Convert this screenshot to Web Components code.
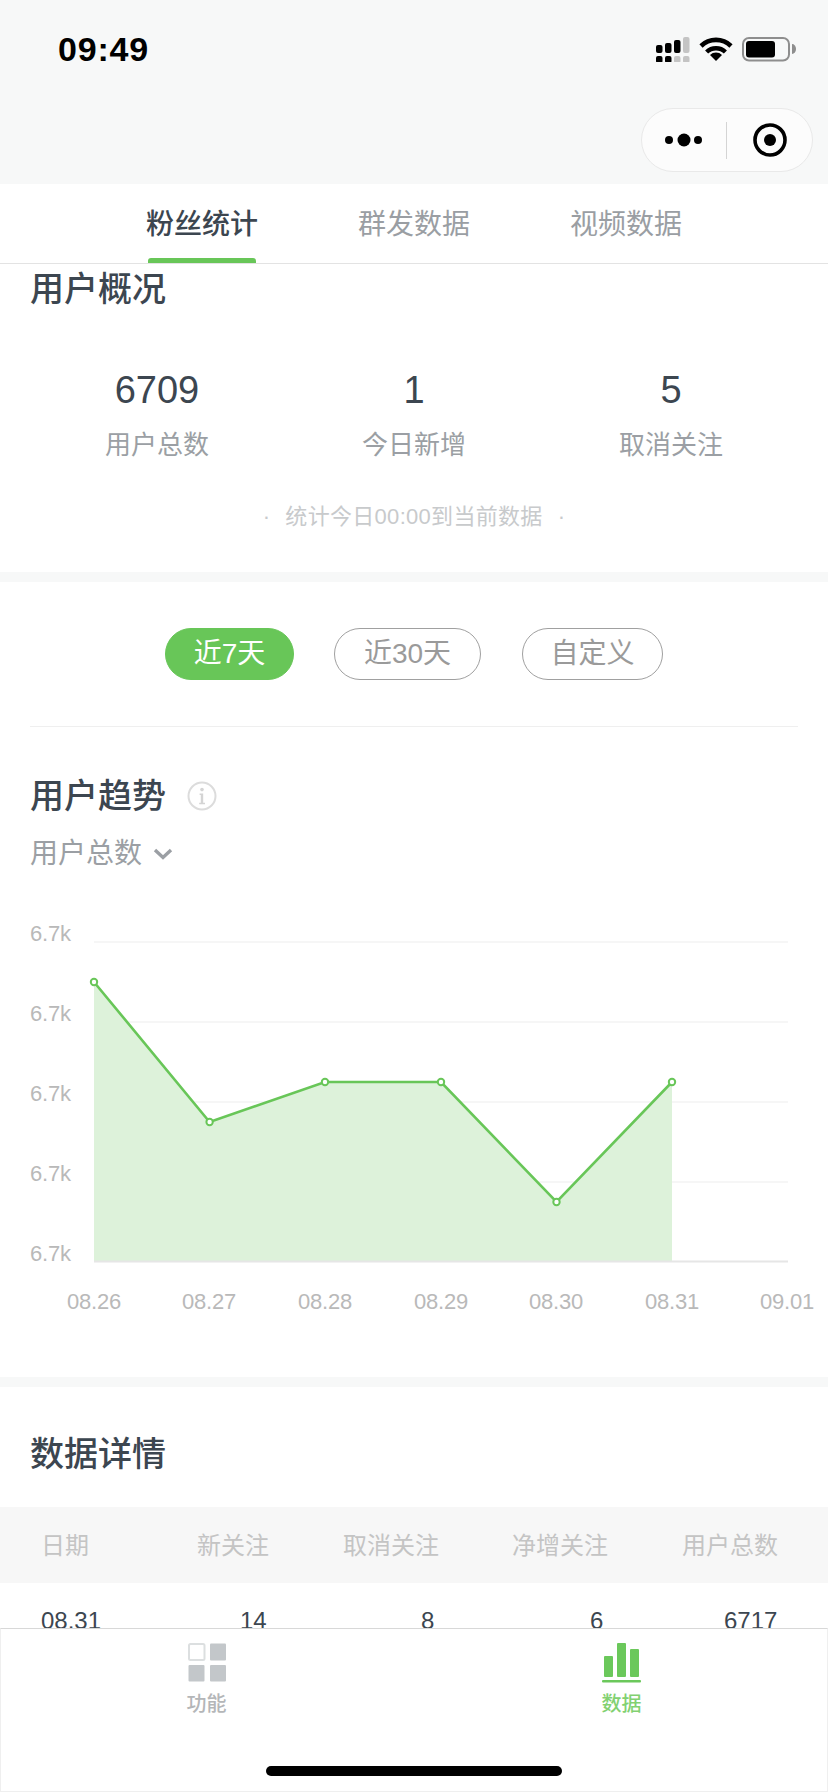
<!DOCTYPE html>
<html lang="zh">
<head>
<meta charset="utf-8">
<title>粉丝统计</title>
<style>
  html, body { margin: 0; padding: 0; background: #fff; }
  body { width: 828px; height: 1792px; overflow: hidden; font-family: "Liberation Sans", "Noto Sans CJK SC", sans-serif; color: #3c4650; }
  .page { width: 828px; height: 1792px; display: flex; flex-direction: column; }
  .scroll { flex: 1; min-height: 0; overflow: hidden; }
</style>
</head>
<body>
<div class="page">
  <nav-bar></nav-bar>
  <tab-strip></tab-strip>
  <div class="scroll">
    <overview-card></overview-card>
    <trend-card></trend-card>
    <detail-card></detail-card>
  </div>
  <bottom-bar></bottom-bar>
</div>

<script>
class NavBar extends HTMLElement {
  constructor() {
    super();
    this.attachShadow({ mode: "open" });
  }

  static get styles() {
    return /* css */`
      :host { display: block; height: 184px; background: #f7f8f8; }

      .status {
        height: 100px;
        box-sizing: border-box;
        padding: 36px 32px 0 58px;
        display: flex;
        justify-content: space-between;
        align-items: flex-start;
      }

      .time {
        font-size: 34px;
        font-weight: 700;
        line-height: 27px;
        letter-spacing: 0.8px;
        color: #000;
      }

      .actions {
        display: flex;
        justify-content: flex-end;
        padding: 8px 15px 0 0;
      }

      .capsule {
        width: 172px;
        height: 64px;
        box-sizing: border-box;
        border: 1px solid #e9e9e9;
        border-radius: 32px;
        background: #fcfcfc;
        display: flex;
        align-items: center;
      }

      .capsule svg { display: block; }
      .capsule .sep { width: 1px; height: 37px; background: #d4d4d4; }
      .capsule .half { flex: 1; display: flex; justify-content: center; align-items: center; }
      .capsule .half:last-child { padding-left: 2px; }
    `;
  }

  connectedCallback() {
    this.shadowRoot.innerHTML = /* html */`
    <style>${NavBar.styles}</style>
    <div class="status">
      <span class="time">09:49</span>
      <svg width="140" height="26" viewBox="655 36 140 26">
        <rect x="655" y="45" width="6.5" height="8" rx="2" fill="#000"/>
        <rect x="664" y="43" width="6.5" height="10" rx="2" fill="#000"/>
        <rect x="673" y="40" width="6.5" height="13" rx="2" fill="#000"/>
        <rect x="682" y="37" width="6.5" height="16" rx="2" fill="#c4c4c4"/>
        <rect x="655" y="56" width="6.5" height="7" rx="2" fill="#000"/>
        <rect x="664" y="56" width="6.5" height="7" rx="2" fill="#000"/>
        <rect x="673" y="56" width="6.5" height="7" rx="2" fill="#c4c4c4"/>
        <rect x="682" y="56" width="6.5" height="7" rx="2" fill="#c4c4c4"/>
        <path d="M700 46 A21.5 21.5 0 0 1 730 46" fill="none" stroke="#000" stroke-width="4.6"/>
        <path d="M705.6 52 A13.5 13.5 0 0 1 724.4 52" fill="none" stroke="#000" stroke-width="4.4"/>
        <path d="M715 61 L709 55 A8.5 8.5 0 0 1 721 55 Z" fill="#000"/>
        <rect x="742" y="38" width="46" height="22.5" rx="6" fill="none" stroke="#8e8e8e" stroke-width="2"/>
        <rect x="745" y="41" width="29" height="16.5" rx="3" fill="#000"/>
        <path d="M791 44 a4 5 0 0 1 0 10 Z" fill="#8e8e8e"/>
      </svg>
    </div>
    <div class="actions">
      <div class="capsule">
        <div class="half">
          <svg width="44" height="14" viewBox="0 0 44 14">
            <circle cx="7" cy="7" r="4" fill="#000"/>
            <circle cx="22" cy="7" r="6.5" fill="#000"/>
            <circle cx="36" cy="7" r="4" fill="#000"/>
          </svg>
        </div>
        <div class="sep"></div>
        <div class="half">
          <svg width="36" height="36" viewBox="0 0 36 36">
            <circle cx="18" cy="18" r="15" fill="none" stroke="#000" stroke-width="3.6"/>
            <circle cx="18" cy="18" r="6" fill="#000"/>
          </svg>
        </div>
      </div>
    </div>`;
  }
}

class TabStrip extends HTMLElement {
  constructor() {
    super();
    this.attachShadow({ mode: "open" });
  }

  static get styles() {
    return /* css */`
      :host {
        display: flex;
        height: 80px;
        box-sizing: border-box;
        padding-left: 146px;
        gap: 100px;
        background: #fff;
        border-bottom: 1px solid #e3e3e3;
      }

      .tab {
        width: 112px;
        display: flex;
        flex-direction: column;
        align-items: center;
        padding-top: 21px;
        font-size: 28px;
        line-height: 40px;
        color: #9a9ea3;
      }

      .tab.on { color: #3c4650; font-weight: 500; }
      .bar { width: 108px; height: 5px; margin-top: 13px; border-radius: 3px 3px 0 0; }
      .on .bar { background: #68c658; }
    `;
  }

  connectedCallback() {
    const tabs = ["粉丝统计", "群发数据", "视频数据"];
    this.shadowRoot.innerHTML = /* html */`
    <style>${TabStrip.styles}</style>
    ${tabs.map((t, i) => `<div class="tab ${i === 0 ? "on" : ""}"><span>${t}</span><div class="bar"></div></div>`).join("")}`;
  }
}

class OverviewCard extends HTMLElement {
  constructor() {
    super();
    this.attachShadow({ mode: "open" });
  }

  static get styles() {
    return /* css */`
      :host {
        display: block;
        height: 318px;
        box-sizing: border-box;
        padding-top: 5px;
        border-bottom: 10px solid #f7f8f8;
      }

      h2 { margin: 0 0 0 30px; font-size: 34px; line-height: 40px; font-weight: 500; }

      .stats {
        display: grid;
        grid-template-columns: repeat(3, 1fr);
        padding: 0 28.5px;
        margin-top: 59px;
        text-align: center;
      }

      .num { font-size: 38px; line-height: 44px; }
      .label { font-size: 26px; line-height: 36px; margin-top: 15px; color: #9b9fa4; }

      .note {
        display: flex;
        justify-content: center;
        gap: 15px;
        margin-top: 39px;
        font-size: 22px;
        line-height: 30px;
        letter-spacing: 0.3px;
        color: #c8cacc;
      }
    `;
  }

  connectedCallback() {
    const stats = [["6709", "用户总数"], ["1", "今日新增"], ["5", "取消关注"]];
    this.shadowRoot.innerHTML = /* html */`
    <style>${OverviewCard.styles}</style>
    <h2>用户概况</h2>
    <div class="stats">
      ${stats.map(([n, l]) => `<div><div class="num">${n}</div><div class="label">${l}</div></div>`).join("")}
    </div>
    <div class="note"><span>·</span><span>统计今日00:00到当前数据</span><span>·</span></div>`;
  }
}

class TrendCard extends HTMLElement {
  constructor() {
    super();
    this.attachShadow({ mode: "open" });
  }

  static get styles() {
    return /* css */`
      :host {
        display: block;
        height: 805px;
        box-sizing: border-box;
        padding-top: 46px;
        border-bottom: 10px solid #f7f8f8;
      }

      .pills { display: flex; padding-left: 165px; }

      .pill {
        height: 52px;
        box-sizing: border-box;
        border: 1px solid #a0a0a0;
        border-radius: 26px;
        font-size: 28px;
        line-height: 50px;
        text-align: center;
        color: #9a9a9a;
      }

      .pill.on { background: #68c658; border-color: #68c658; color: #fff; }
      .rule { height: 1px; margin: 46px 30px 0; background: #efefef; }

      .head { display: flex; align-items: center; gap: 21px; margin: 49px 0 0 30px; }
      h2 { margin: 0; font-size: 34px; line-height: 40px; font-weight: 500; }

      .pick {
        display: flex;
        align-items: center;
        gap: 11px;
        margin: 18px 0 -1px 30px;
        font-size: 28px;
        line-height: 40px;
        color: #9b9fa4;
      }

      svg { display: block; }
      .axis { font-size: 22px; fill: #b9b9b9; letter-spacing: -0.2px; }
    `;
  }

  connectedCallback() {
    const pts = [[94, 982], [209.6, 1122], [325, 1082], [441, 1082], [556.5, 1202], [672, 1082]];
    const line = pts.map(p => p.join(",")).join(" ");
    const grid = [942, 1022, 1102, 1182];
    const days = [[94, "08.26"], [209, "08.27"], [325, "08.28"], [441, "08.29"], [556, "08.30"], [672, "08.31"], [787, "09.01"]];
    this.shadowRoot.innerHTML = /* html */`
    <style>${TrendCard.styles}</style>
    <div class="pills">
      <div class="pill on" style="width:129px">近7天</div>
      <div class="pill" style="width:147px;margin-left:40px">近30天</div>
      <div class="pill" style="width:141px;margin-left:41px">自定义</div>
    </div>
    <div class="rule"></div>
    <div class="head">
      <h2>用户趋势</h2>
      <svg width="30" height="30" viewBox="0 0 30 30">
        <circle cx="15" cy="15" r="13.5" fill="none" stroke="#dcdcdc" stroke-width="2"/>
        <circle cx="15" cy="8.6" r="1.8" fill="#d4d4d4"/>
        <path d="M12.6 12.6h3.6v9.2h1.8v1.4h-5.8v-1.4h1.6v-7.8h-1.2z" fill="#d4d4d4"/>
      </svg>
    </div>
    <div class="pick">
      <span>用户总数</span>
      <svg width="20" height="12" viewBox="0 0 20 12">
        <path d="M2 2 L10 9.5 L18 2" fill="none" stroke="#9b9fa4" stroke-width="3.4"/>
      </svg>
    </div>
    <svg width="828" height="504" viewBox="0 873 828 504">
      ${grid.map(y => `<line x1="94" x2="788" y1="${y}" y2="${y}" stroke="#f6f6f6" stroke-width="2"/>`).join("")}
      <polygon points="94,1262 ${line} 672,1262" fill="#ddf2da"/>
      <line x1="94" x2="788" y1="1261.5" y2="1261.5" stroke="#e6e6e6" stroke-width="2"/>
      <polyline points="${line}" fill="none" stroke="#68c658" stroke-width="2.6"/>
      ${pts.map(([x, y]) => `<circle cx="${x}" cy="${y}" r="3.2" fill="#fff" stroke="#68c658" stroke-width="2"/>`).join("")}
      ${[941, 1021, 1101, 1181, 1261].map(y => `<text class="axis" x="30" y="${y}">6.7k</text>`).join("")}
      ${days.map(([x, d]) => `<text class="axis" x="${x}" y="1309" text-anchor="middle">${d}</text>`).join("")}
    </svg>`;
  }
}

class DetailCard extends HTMLElement {
  constructor() {
    super();
    this.attachShadow({ mode: "open" });
  }

  static get styles() {
    return /* css */`
      :host { display: block; padding-top: 47px; }

      h2 { margin: 0 0 0 30px; font-size: 34px; line-height: 40px; font-weight: 500; }

      .row { display: grid; font-size: 24px; }

      .head {
        margin-top: 33px;
        height: 76px;
        box-sizing: border-box;
        align-items: center;
        padding: 0 0 4px 41px;
        grid-template-columns: 156px 146px 169px 170px 1fr;
        background: #f7f7f7;
        color: #c4c4c4;
      }

      .body {
        padding: 20px 0 0 41px;
        line-height: 36px;
        grid-template-columns: 199px 181px 169px 134px 1fr;
        color: #3c4650;
      }
    `;
  }

  connectedCallback() {
    const cols = ["日期", "新关注", "取消关注", "净增关注", "用户总数"];
    const vals = ["08.31", "14", "8", "6", "6717"];
    this.shadowRoot.innerHTML = /* html */`
    <style>${DetailCard.styles}</style>
    <h2>数据详情</h2>
    <div class="row head">${cols.map(c => `<span>${c}</span>`).join("")}</div>
    <div class="row body">${vals.map(v => `<span>${v}</span>`).join("")}</div>`;
  }
}

class BottomBar extends HTMLElement {
  constructor() {
    super();
    this.attachShadow({ mode: "open" });
  }

  static get styles() {
    return /* css */`
      :host {
        display: block;
        height: 164px;
        box-sizing: border-box;
        background: #fff;
        border: 1px solid #efefef;
        border-top-color: #d8d8d8;
        padding-top: 12px;
      }

      .items { display: grid; grid-template-columns: 1fr 1fr; }

      .item {
        display: flex;
        flex-direction: column;
        align-items: center;
        font-size: 20px;
        font-weight: 500;
        line-height: 28px;
        color: #b4b6b8;
      }

      .item svg { display: block; margin-bottom: 7px; }
      .item:first-child { padding-right: 2px; }
      .item.on { color: #82d171; padding-left: 2px; }

      .home { width: 296px; height: 10px; margin: 48px auto 0; border-radius: 5px; background: #000; }
    `;
  }

  connectedCallback() {
    this.shadowRoot.innerHTML = /* html */`
    <style>${BottomBar.styles}</style>
    <div class="items">
      <div class="item">
        <svg width="42" height="42" viewBox="186 1641 42 42">
          <rect x="189" y="1644" width="15.5" height="16" rx="1.5" fill="#fff" stroke="#dcdfe0" stroke-width="2"/>
          <rect x="210" y="1643.5" width="16" height="17" rx="1" fill="#c3c7ca"/>
          <rect x="188.5" y="1665" width="16" height="16.5" rx="1" fill="#c3c7ca"/>
          <rect x="210" y="1665" width="16" height="16.5" rx="1" fill="#c3c7ca"/>
        </svg>
        <span>功能</span>
      </div>
      <div class="item on">
        <svg width="42" height="42" viewBox="600 1641 42 42">
          <rect x="603" y="1656" width="9" height="21" rx="1" fill="#6bc85b"/>
          <rect x="616" y="1643" width="9" height="34" rx="1" fill="#6bc85b"/>
          <rect x="629" y="1649" width="9" height="28" rx="1" fill="#6bc85b"/>
          <rect x="601" y="1680" width="39" height="2.4" rx="1" fill="#6bc85b"/>
        </svg>
        <span>数据</span>
      </div>
    </div>
    <div class="home"></div>`;
  }
}

customElements.define("nav-bar", NavBar);
customElements.define("tab-strip", TabStrip);
customElements.define("overview-card", OverviewCard);
customElements.define("trend-card", TrendCard);
customElements.define("detail-card", DetailCard);
customElements.define("bottom-bar", BottomBar);
</script>
</body>
</html>
